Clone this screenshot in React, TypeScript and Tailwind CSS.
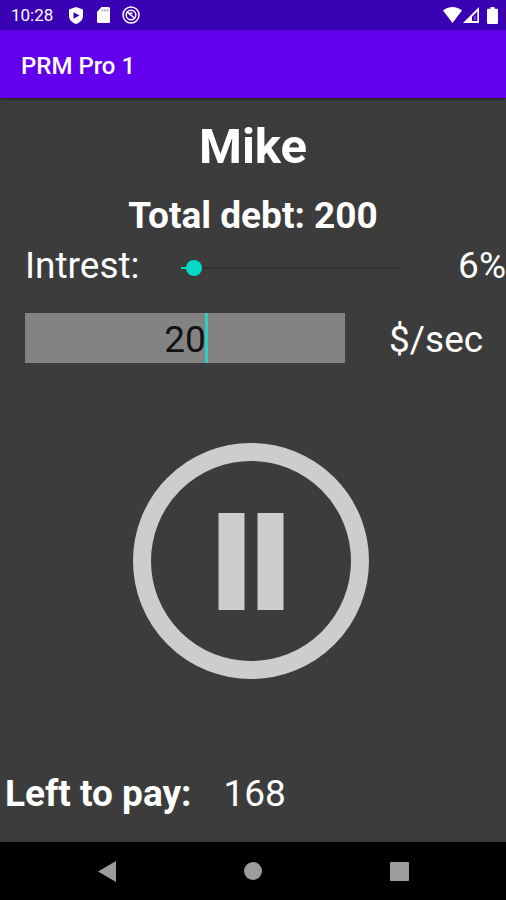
import { useState } from "react";

function StatusBar() {
  return (
    <div className="flex h-[30px] items-center justify-between bg-[#3a00b4] pr-2 pl-[11px] text-white">
      <div className="flex items-center">
        <span className="w-[58px] text-[17px] leading-5">10:28</span>
        {/* Play Protect */}
        <svg viewBox="0 0 14 17" className="h-[17px] w-[14px]" aria-hidden="true">
          <path d="M7 0 14 2.500v6.500c0 3.800-3 6.600-7 8-4-1.400-7-4.200-7-8V2.500z" fill="currentColor" />
          <path d="M4.500 5.200v6.600l6-3.300z" fill="#3a00b4" />
        </svg>
        {/* SD card */}
        <svg viewBox="0 0 13 16" className="ml-[14px] h-4 w-[13px]" aria-hidden="true">
          <path d="M4.500 0H11.500Q13 0 13 1.500V14.500Q13 16 11.500 16H1.500Q0 16 0 14.500V5z" fill="currentColor" />
          <path d="M4.800 2h1.400v2.500H4.800zM7.300 2h1.400v2.500H7.300zM9.800 2h1.400v2.500H9.800z" fill="#3a00b4" opacity=".4" />
        </svg>
        {/* Data saver */}
        <svg viewBox="0 0 18 18" className="ml-3 h-[18px] w-[18px]" fill="none" stroke="currentColor" aria-hidden="true">
          <circle cx="9" cy="9" r="8" strokeWidth="1.500" />
          <circle cx="9" cy="9" r="4.800" strokeWidth="1.500" />
          <path d="M5 5.800 13 12.500M7.500 7.200h3" strokeWidth="1.600" />
        </svg>
      </div>
      <div className="flex items-center">
        <svg viewBox="0 0 19 16" className="h-4 w-[19px]" aria-hidden="true">
          <path d="M0 3.600C5.200-1.200 13.800-1.200 19 3.600L9.500 16z" fill="currentColor" />
        </svg>
        <svg viewBox="0 0 16 16" className="ml-px h-4 w-4" aria-hidden="true">
          <path d="M16 0v16H0z" fill="currentColor" />
          <path d="M14.300 4.500v9.500H9V9.800z" fill="#3a00b4" />
          <path d="M10.800 13V9.800L12.800 8v5z" fill="currentColor" opacity=".3" />
        </svg>
        <svg viewBox="0 0 11 17" className="ml-2 h-[17px] w-[11px]" aria-hidden="true">
          <path d="M3.500 0h4v1.800H10Q11 1.800 11 3v12.800Q11 17 10 17H1Q0 17 0 15.800V3Q0 1.800 1 1.800h2.500z" fill="currentColor" />
        </svg>
      </div>
    </div>
  );
}

function NavBar() {
  return (
    <nav className="flex h-[58px] items-center justify-center gap-[98px] bg-black text-[#9c9c9c]">
      <button type="button" aria-label="Back" className="flex size-12 items-center justify-center">
        <svg viewBox="0 0 18 21" className="h-[21px] w-[18px]">
          <path d="M18 0v21L0 10.500z" fill="currentColor" />
        </svg>
      </button>
      <button type="button" aria-label="Home" className="flex size-12 items-center justify-center">
        <span className="size-[18px] rounded-full bg-current" />
      </button>
      <button type="button" aria-label="Overview" className="flex size-12 items-center justify-center">
        <span className="size-[19px] rounded-[1px] bg-current" />
      </button>
    </nav>
  );
}

export default function App() {
  const [interest, setInterest] = useState(6);
  const [rate, setRate] = useState("20");
  const [running, setRunning] = useState(true);

  return (
    <div className="flex min-h-screen flex-col bg-[#3c3c3c] font-['Roboto',sans-serif] text-white">
      <StatusBar />
      <header className="flex h-[68px] items-center bg-[#6200ee] px-[21px] pt-[3px] shadow-[0_1px_2px_rgba(0,0,0,0.5)]">
        <h1 className="text-[24px] leading-7 font-medium">PRM Pro 1</h1>
      </header>

      <main className="flex flex-1 flex-col pt-[19px] text-[37px] leading-[44px]">
        <h2 className="text-center text-[49px] leading-[60px] font-bold">Mike</h2>
        <p className="mt-[17px] text-center font-bold">Total debt: 200</p>

        <div className="mt-[6px] flex items-center pl-[25px]">
          <label htmlFor="interest" className="w-[156px]">
            Intrest:
          </label>
          <div className="relative mt-1 h-4 flex-1">
            <div className="absolute inset-x-0 top-[7px] h-[2px] bg-[#323232]">
              <div className="h-full bg-[#03dac5]" style={{ width: `${interest}%` }} />
            </div>
            <input
              id="interest"
              type="range"
              min={0}
              max={100}
              value={interest}
              onChange={(e) => setInterest(Number(e.target.value))}
              className="absolute -inset-x-2 top-0 h-4 appearance-none bg-transparent [&::-webkit-slider-thumb]:size-4 [&::-webkit-slider-thumb]:appearance-none [&::-webkit-slider-thumb]:rounded-full [&::-webkit-slider-thumb]:bg-[#03dac5]"
            />
          </div>
          <output htmlFor="interest" className="w-[106px] text-right">
            {interest}%
          </output>
        </div>

        <div className="mt-[25px] flex items-center pl-[25px]">
          <div className="relative flex-1">
            <input
              id="rate"
              type="text"
              inputMode="numeric"
              value={rate}
              onChange={(e) => setRate(e.target.value)}
              className="block h-[50px] w-full bg-[#838383] pt-[2px] text-center text-[#111] caret-transparent outline-none"
            />
            {/* Text cursor */}
            <span className="pointer-events-none absolute inset-y-0 left-1/2 ml-5 w-[3px] bg-[#2bd0bf]" />
          </div>
          <label htmlFor="rate" className="w-[161px] pt-1 pl-11">
            $/sec
          </label>
        </div>

        <div className="flex flex-1 items-center justify-center pr-1 pb-[14px]">
          <button type="button" aria-label={running ? "Pause" : "Resume"} onClick={() => setRunning(!running)}>
            <svg viewBox="0 0 236 236" className="size-[236px] text-[#cdcdcd]">
              <circle cx="118" cy="118" r="109" fill="none" stroke="currentColor" strokeWidth="18" />
              {running ? (
                <path d="M85.500 70h26v97h-26zM124.500 70h26v97h-26z" fill="currentColor" />
              ) : (
                <path d="M90 66v104l78-52z" fill="currentColor" />
              )}
            </svg>
          </button>
        </div>

        <p className="flex gap-8 pb-[26px] pl-[5px]">
          <span className="font-bold">Left to pay:</span>
          <span>168</span>
        </p>
      </main>
      <NavBar />
    </div>
  );
}
